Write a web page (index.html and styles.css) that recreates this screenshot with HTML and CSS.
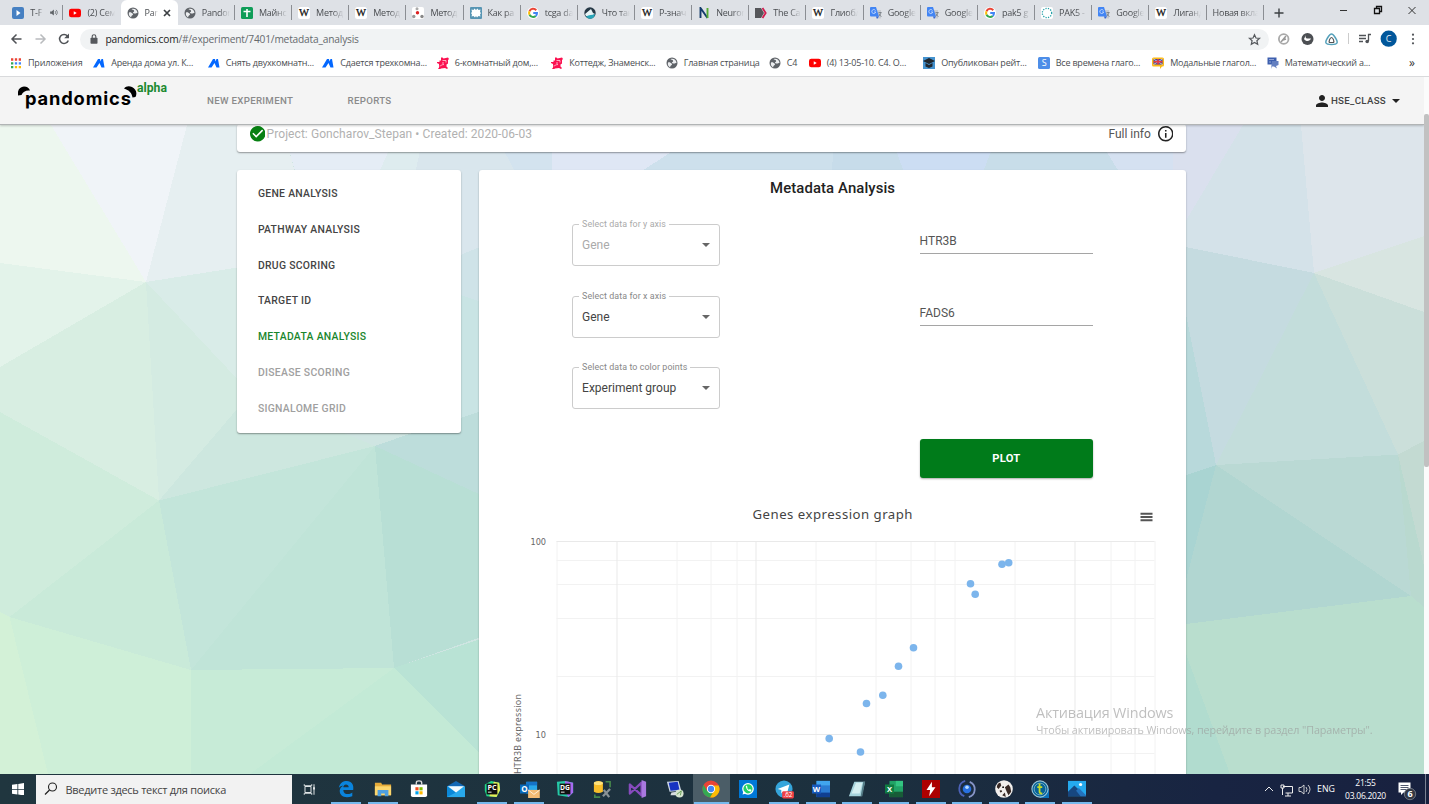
FILE: index.html
```html
<!DOCTYPE html>
<html lang="ru">
<head>
<meta charset="utf-8">
<title>Pandomics</title>
<link rel="stylesheet" href="styles.css">
</head>
<body>
<svg class="defs" aria-hidden="true">
  <symbol id="globe" viewBox="0 0 24 24"><circle cx="12" cy="12" r="11" fill="#5f6368"/><path d="M4 11c4-1 5 1 7 2s1 3-1 4-1 3-2 4C4 18 3 15 4 11zM9 4c1 2 4 1 5 3s-1 3-2 4 2 2 4 2 3-1 5-1c0-5-5-10-12-8z" fill="#eceef0"/></symbol>
  <symbol id="yt" viewBox="0 0 24 24"><rect x="0" y="3.500" width="24" height="17" rx="4.500" fill="#f00"/><path d="M9.500 8.500v7l6-3.500z" fill="#fff"/></symbol>
  <symbol id="wiki" viewBox="0 0 24 24"><rect width="24" height="24" rx="5" fill="#fff"/><text x="12" y="18.500" font-family="Liberation Serif" font-size="19" text-anchor="middle" fill="#111" stroke="#111" stroke-width=".5" textLength="20" lengthAdjust="spacingAndGlyphs">W</text></symbol>
  <symbol id="google" viewBox="0 0 24 24"><circle cx="12" cy="12" r="12" fill="#fff"/><g fill="none" stroke-width="4"><path d="M18.500 6.500A8 8 0 0 0 5 8.500" stroke="#ea4335"/><path d="M5 8.500a8 8 0 0 0 0 7" stroke="#fbbc05"/><path d="M5 15.500a8 8 0 0 0 12.500 2.300" stroke="#34a853"/><path d="M12.500 12H20a8 8 0 0 1-2.500 5.800" stroke="#4285f4"/></g></symbol>
  <symbol id="gtr" viewBox="0 0 24 24"><path d="M10 6h12v17H13z" fill="#c9ccd1"/><path d="M2 0h10l6 19H2a2 2 0 0 1-2-2V2a2 2 0 0 1 2-2z" fill="#4285f4"/><path d="M12 19h6l-4 5z" fill="#3367d6"/><path d="M11 7a4 4 0 1 0 .5 3H8" fill="none" stroke="#dce8fd" stroke-width="1.500"/><path d="M17 11h6m-1 0c-1 4-3 6-4 7m0-5c1 3 3 5 5 6" fill="none" stroke="#6b7178" stroke-width="1.500"/></symbol>
  <symbol id="mount" viewBox="0 0 24 24"><path d="M0 21 10 4h4l1 5 2-5h3l3 17h-6l-4-9-6 9z" fill="#0468ff"/></symbol>
  <symbol id="red" viewBox="0 0 24 24"><path d="M0 10h5V7h3V1h3l2 2 9-2 2 3-2 2v7l-3 2v4l3 3-2 2-4-2-8 1-3 2-3-1 2-3v-7l-4-2z" fill="#fb1150"/><path d="M11 7h7v4M5 18c3 0 4-3 9-3M10 12h4" fill="none" stroke="#fff" stroke-width="1.300"/></symbol>
</svg>

<div class="tabs">
  <div class="tab"><svg class="fav"><rect width="12" height="12" rx="2" fill="#4680c2"/><path d="M4.500 3v6L8.500 6z" fill="#fff"/></svg><span class="short">T-F</span><svg class="speaker" viewBox="0 0 24 24"><path d="M3 9v6h4l6 5V4L7 9z" fill="#5f6368"/><path d="M16 8c2 2 2 6 0 8M19 5c4 4 4 10 0 14" fill="none" stroke="#5f6368" stroke-width="2"/></svg></div>
  <div class="tab"><svg class="fav"><use href="#yt"/></svg><span>(2) Сем</span></div>
  <div class="tab active"><svg class="fav"><use href="#globe"/></svg><span class="short">Pan</span><svg class="close" viewBox="0 0 10 10"><path d="m2 2 6 6m0-6-6 6" stroke="#3c4043" stroke-width="1.700"/></svg></div>
  <div class="tab"><svg class="fav"><use href="#globe"/></svg><span>Pandor</span></div>
  <div class="tab"><svg class="fav"><rect width="12" height="12" rx="1.500" fill="#0f9d58"/><path d="M2.500 4.500h7M6 2v8" stroke="#fff" stroke-width="1.600"/></svg><span>Майнс</span></div>
  <div class="tab"><svg class="fav"><use href="#wiki"/></svg><span>Метод</span></div>
  <div class="tab"><svg class="fav"><use href="#wiki"/></svg><span>Метод</span></div>
  <div class="tab"><svg class="fav"><rect width="12" height="12" rx="2" fill="#fff"/><circle cx="5.500" cy="5.800" r="1.700" fill="#d22"/><circle cx="5" cy="1.800" r="1.500" fill="#aaa"/><circle cx="1.800" cy="9.500" r="1.700" fill="#999"/><circle cx="10" cy="9.500" r="1.700" fill="#888"/></svg><span>Метод</span></div>
  <div class="tab"><svg class="fav"><rect width="12" height="12" rx="1" fill="#5795b3"/><path d="m6 3 1.500-1.500L8.500 3l2-.5L10 5l1 1-1 1.500.5 2-2-.5L7 10.500 6 9l-1 1.500L3.500 9l-2 .5.500-2L1 6l1-1-.500-2.500 2 .5 1-1.500z" fill="#fff"/></svg><span>Как ра</span></div>
  <div class="tab"><svg class="fav"><use href="#google"/></svg><span>tcga da</span></div>
  <div class="tab"><svg class="fav"><circle cx="6" cy="6" r="5.700" fill="#263845"/><path d="M1 7 7 2l2 4 2 1-4 2-5 0z" fill="#e8f3f5"/><path d="M2 9.500c3-2 6-1 9-2.500-1 6-6 6-9 2.500z" fill="#28a5b8"/></svg><span>Что так</span></div>
  <div class="tab"><svg class="fav"><use href="#wiki"/></svg><span>P-знач</span></div>
  <div class="tab"><svg class="fav"><path d="M2.500 11V1l7 10" fill="none" stroke="#143c6b" stroke-width="1.900"/><path d="M9.500 11V1" stroke="#55ad35" stroke-width="1.900"/></svg><span>Neuron</span></div>
  <div class="tab"><svg class="fav"><path d="M0 1h6l3 5-3 5H0z" fill="#55565a"/><path d="m7.500 1 3.200 5-3.200 5" fill="none" stroke="#d21d4f" stroke-width="1.800"/></svg><span>The Ca</span></div>
  <div class="tab"><svg class="fav"><use href="#wiki"/></svg><span>Глиобл</span></div>
  <div class="tab"><svg class="fav"><use href="#gtr"/></svg><span>Google</span></div>
  <div class="tab"><svg class="fav"><use href="#gtr"/></svg><span>Google</span></div>
  <div class="tab"><svg class="fav"><use href="#google"/></svg><span>pak5 g</span></div>
  <div class="tab"><svg class="fav"><rect width="12" height="12" rx="2" fill="#fff"/><circle cx="6" cy="6" r="4.700" fill="none" stroke="#24a0a8" stroke-width="1.300" stroke-dasharray="1.200 1.300"/></svg><span>PAK5 -</span></div>
  <div class="tab"><svg class="fav"><use href="#gtr"/></svg><span>Google</span></div>
  <div class="tab"><svg class="fav"><use href="#wiki"/></svg><span>Лиганд</span></div>
  <div class="tab noicon"><span>Новая вкладка</span></div>
  <svg class="newtab" viewBox="0 0 10 10"><path d="M5 .5v9M.5 5h9" stroke="#3c4043" stroke-width="1.400"/></svg>
  <svg class="winctl" viewBox="1330 0 99 25"><path d="M1340 10.500h7M1408.500 7l7 7m0-7-7 7" stroke="#333" fill="none"/><path d="M1374.500 8.500h5v5h-5zM1376.500 8v-1.500h5v5h-2" stroke="#111" fill="none" stroke-width="1.300"/></svg>
</div>

<div class="toolbar">
  <svg class="nav" viewBox="0 25 80 27"><g fill="none" stroke-width="1.500"><path d="M21.500 39h-9m4-4.500-4.500 4.500 4.500 4.500" stroke="#505357"/><path d="M35.500 39h9m-4-4.500 4.500 4.500-4.500 4.500" stroke="#b9bbbe"/><path d="M67.500 36a4.500 4.500 0 1 0 .8 4.500" stroke="#505357"/></g><path d="M69 33.500v4.800h-4.800z" fill="#505357"/></svg>
  <div class="omnibox">
    <svg class="lock" viewBox="0 0 8 10"><rect x=".5" y="3.700" width="7" height="6" rx=".8" fill="#55585c"/><path d="M2.200 4V2.500a1.800 1.800 0 0 1 3.600 0V4" fill="none" stroke="#55585c" stroke-width="1.100"/></svg>
    <span class="url"><b>pandomics.com</b>/#/experiment/7401/metadata_analysis</span>
    <svg class="star" viewBox="0 0 24 24"><path d="m12 3 2.700 6.200 6.700.6-5 4.500 1.500 6.600L12 17.500l-5.900 3.400 1.500-6.600-5-4.500 6.700-.6z" fill="none" stroke="#55585c" stroke-width="2.200"/></svg>
  </div>
  <svg class="ext" viewBox="1269 25 160 27">
    <circle cx="1283.700" cy="39" r="4.800" fill="none" stroke="#aaa" stroke-width="1.800"/><path d="m1281 42 5-6m-3 4 3-1" stroke="#999" stroke-width="1.500"/>
    <circle cx="1307.500" cy="39" r="6" fill="#4c4f53"/><path d="M1306 35c-1 3 0 4 5 3.500-1 3-5 3.500-7 .5z" fill="#fff"/>
    <path d="M1331.500 34c2 0 6.500 7 5.500 9s-10 2-11 0 3.500-9 5.500-9z" fill="none" stroke="#54a0ba" stroke-width="1.500"/><path d="M1331.500 37.500c1.500 0 3 4 2 5h-4c-1-1 .5-5 2-5z" fill="none" stroke="#555" stroke-width="1.200"/>
    <path d="M1348.500 33v11" stroke="#ccc"/>
    <path d="M1359 35.500h7M1359 38.500h7M1359 41.500h4M1368.500 41v-6.500h2.500" stroke="#505357" stroke-width="1.300" fill="none"/><circle cx="1367.200" cy="41.500" r="1.800" fill="#505357"/>
    <circle cx="1388.700" cy="38.700" r="8.100" fill="#01579b"/><text x="1388.700" y="42" fill="#e6eef5" font-size="9" text-anchor="middle">C</text>
    <g fill="#505357"><circle cx="1413" cy="34.700" r="1.100"/><circle cx="1413" cy="39" r="1.100"/><circle cx="1413" cy="43.300" r="1.100"/></g>
  </svg>
</div>

<div class="bookmarks">
  <div class="bm w1"><svg class="bmi" viewBox="0 0 12 12"><path d="M1 2.500h10" stroke="#ea4335" stroke-width="2.300" stroke-dasharray="2.300 1.550"/><path d="M4.850 6.300h7" stroke="#4285f4" stroke-width="2.300" stroke-dasharray="2.300 1.550"/><path d="M4.850 10.100h7" stroke="#fbbc05" stroke-width="2.300" stroke-dasharray="2.300 1.550"/><path d="M1 5.150h2.300v2.300H1zM1 8.950h2.300v2.300H1z" fill="#34a853"/></svg><span>Приложения</span></div>
  <div class="bm w2"><svg class="bmi"><use href="#mount"/></svg><span>Аренда дома ул. К...</span></div>
  <div class="bm w2"><svg class="bmi"><use href="#mount"/></svg><span>Снять двухкомнатн...</span></div>
  <div class="bm w2"><svg class="bmi"><use href="#mount"/></svg><span>Сдается трехкомна...</span></div>
  <div class="bm w2"><svg class="bmi"><use href="#red"/></svg><span>6-комнатный дом,...</span></div>
  <div class="bm w2"><svg class="bmi"><use href="#red"/></svg><span>Коттедж, Знаменск...</span></div>
  <div class="bm w3"><svg class="bmi"><use href="#globe"/></svg><span>Главная страница</span></div>
  <div class="bm w4"><svg class="bmi"><use href="#globe"/></svg><span>C4</span></div>
  <div class="bm w2"><svg class="bmi"><use href="#yt"/></svg><span>(4) 13-05-10. С4. О...</span></div>
  <div class="bm w2"><svg class="bmi" viewBox="0 0 12 12"><path d="M0 0h12v12H0z" fill="#4593cf"/><path d="m0 4 6-3 6 3-6 3zM2.500 6v3.500L6 11l3.500-1.500V6L6 8z" fill="#20272e"/></svg><span>Опубликован рейт...</span></div>
  <div class="bm w2"><svg class="bmi" viewBox="0 0 12 12"><rect width="12" height="12" rx="1.500" fill="#4d8ee8"/><text x="6" y="9.400" font-size="9" fill="#fff" text-anchor="middle">S</text></svg><span>Все времена глаго...</span></div>
  <div class="bm w2"><svg class="bmi" viewBox="0 0 12 12"><path d="M1.500.5h9q1.500 0 1.500 1.500v6q0 1.500-1.500 1.500H10L8 12V9.500H1.500Q0 9.500 0 8V2Q0 .5 1.500.5z" fill="#fbb917"/><path d="M1.500 2h9v5.500h-9z" fill="#344f9c"/><path d="m1.500 2 9 5.500m0-5.500-9 5.500" stroke="#f5d5d8" stroke-width=".8"/><path d="M6 2v5.500M1.500 4.700h9" stroke="#e83a45" stroke-width="1.500"/></svg><span>Модальные глагол...</span></div>
  <div class="bm w2"><svg class="bmi" viewBox="0 0 12 12"><path d="M.5.500h9v7h-9z" fill="#3d5fae"/><path d="M5 4h6.500v4L9 9l1 2.500-3-2H5L4 12" fill="#637fc0"/><path d="M2 2.500h5M2 5h2" stroke="#a9b8de" stroke-width=".8"/></svg><span>Математический а...</span></div>
  <span class="more">»</span>
</div>

<div class="viewport">
  <div class="page">
    <svg class="backdrop" viewBox="0 125 1424 649" shape-rendering="crispEdges">
      <path d="M0 125h1424v649H0z" fill="#cfe5e2"/>
      <path d="M0 125h51l95 157-146-19z" fill="#edf7ef"/><path d="M51 125h136l-41 157z" fill="#f0f4f8"/>
      <path d="M187 125h95l13 47-35 92-114 18z" fill="#e6eff1"/>
      <path d="M0 263l146 19L0 367z" fill="#e3f3ea"/><path d="M0 367l146-85 13 218.500L0 412z" fill="#d8eee2"/>
      <path d="M146 282l114 121-101 97.500z" fill="#d4ebe2"/><path d="M146 282l114-18v139z" fill="#d9ece8"/>
      <path d="M0 412l159 88.500L9.500 617 0 612z" fill="#cfecdc"/><path d="M9.500 617L159 500.500 191 670z" fill="#c9ead9"/>
      <path d="M159 500.500L250 394l125 52z" fill="#cde7df"/><path d="M159 500.500L375 446 191 670z" fill="#c3e5da"/>
      <path d="M191 670l184-224 19 222z" fill="#c0e4d8"/><path d="M375 446l106 49v142l-87 31z" fill="#b8dfd5"/>
      <path d="M375 446l106-37v86z" fill="#bddddb"/>
      <path d="M191 670l203-2-144 106h-59z" fill="#c7ebd7"/><path d="M394 668L250 774h240V637z" fill="#c3ead6"/><path d="M394 668l92-31v122z" fill="#b9e3d5"/>
      <path d="M9.500 617L191 670v104H48z" fill="#ceefd8"/><path d="M0 612l9.500 5L48 774H0z" fill="#d3f1d7"/>
      <path d="M282 125h120l-11 30-12 30h-80z" fill="#e5edf6"/><path d="M400 125h28l-10 50h-40z" fill="#deecef"/>
      <path d="M426 125h70l21 50v70l-76 17-28-80z" fill="#d9e6ed"/><path d="M458 256l29-12v60l-29-10z" fill="#cfe3e8"/><path d="M458 294l29 10v105l-29 10z" fill="#c9e4e4"/>
      <path d="M490 125h62v50h-35z" fill="#d3e3ef"/><path d="M552 125h160l-72 50h-88z" fill="#dfe7f5"/>
      <path d="M712 125h122v50H636z" fill="#cde0ec"/><path d="M834 125h53l18 50h-73z" fill="#c7dcea"/>
      <path d="M887 125h114l-18 50h-78z" fill="#ccddf3"/><path d="M1001 125h89l32 50H982z" fill="#c8dde9"/>
      <path d="M1090 125h83v50h-52z" fill="#d5e1f1"/><path d="M1173 125h70l-56 97h-14z" fill="#dae0ee"/>
      <path d="M1243 125h58l13 148-130-26v-23z" fill="#d4e2e9"/><path d="M1301 125h123v111l-110 37z" fill="#dde5eb"/>
      <path d="M1314 273l110-37v76z" fill="#d8e5e1"/><path d="M1314 273l110 39v129l-26 13.500z" fill="#cbdfda"/>
      <path d="M1314 273l84 181.500L1216 465z" fill="#c3dddb"/><path d="M1314 273l-98 192-30-149v-69z" fill="#c5dbe0"/>
      <path d="M1186 314l30 151-30 10z" fill="#b8d9db"/><path d="M1186 475l30-10-30 120z" fill="#a9d4d2"/>
      <path d="M1216 465l182-10.500L1411 596z" fill="#bad9d4"/><path d="M1216 465l195 131-225 28v-44z" fill="#b1d6d1"/>
      <path d="M1398 454.500l26-13.500v125z" fill="#c3dad2"/><path d="M1398 454.500L1424 566v41l-13-11z" fill="#b9d9cf"/>
      <path d="M1186 624l225-28 13 11v167h-238z" fill="#b9dece"/><path d="M1186 654l44 120h-44z" fill="#b1dccf"/>
    </svg>
    <header class="appbar">
      <div class="brand">
        <svg class="ears" viewBox="18 85 120 16"><path d="M18 95.500c-1-5 2-9 6-9 3 0 5 1.500 6 4-4-.5-7 1-8.500 4.500zM124 88.500c2-2.500 5-3 8-1.500 4 2 5.500 6 3.500 10l-3 .5c-.5-4.500-3.500-7.500-8.500-9z"/></svg>
        <span class="brandname">pandomics</span><span class="alpha">alpha</span>
      </div>
      <span class="link link-new">NEW EXPERIMENT</span><span class="link link-rep">REPORTS</span>
      <div class="user"><svg class="person" viewBox="4 4 16 16"><path d="M12 12c2.210 0 4-1.790 4-4s-1.790-4-4-4-4 1.790-4 4 1.790 4 4 4zm0 2c-2.670 0-8 1.340-8 4v2h16v-2c0-2.660-5.330-4-8-4z"/></svg><span>HSE_CLASS</span><i class="caret"></i></div>
    </header>
    <main class="content">
      <section class="card info">
        <svg class="round" viewBox="2 2 20 20"><path fill="#078012" d="M12 2C6.480 2 2 6.480 2 12s4.480 10 10 10 10-4.480 10-10S17.520 2 12 2zm-2 15l-5-5 1.410-1.410L10 14.170l7.590-7.590L19 8l-9 9z"/></svg><span class="project">Project: Goncharov_Stepan • Created: 2020-06-03</span><span class="full">Full info</span><svg class="round" viewBox="2 2 20 20"><path fill="#222" d="M11 7h2v2h-2zm0 4h2v6h-2zm1-9C6.480 2 2 6.480 2 12s4.480 10 10 10 10-4.480 10-10S17.520 2 12 2zm0 18c-4.410 0-8-3.590-8-8s3.590-8 8-8 8 3.590 8 8-3.590 8-8 8z"/></svg>
      </section>
      <div class="columns">
        <nav class="card menu">
          <a>GENE ANALYSIS</a><a>PATHWAY ANALYSIS</a><a>DRUG SCORING</a><a>TARGET ID</a><a class="on">METADATA ANALYSIS</a><a class="off">DISEASE SCORING</a><a class="off">SIGNALOME GRID</a>
        </nav>
        <section class="card main">
          <h1>Metadata Analysis</h1>
          <div class="form">
            <div class="select disabled"><label>Select data for y axis</label><span>Gene</span><i class="caret"></i></div>
            <div class="input">HTR3B</div>
            <div class="select"><label>Select data for x axis</label><span>Gene</span><i class="caret"></i></div>
            <div class="input">FADS6</div>
            <div class="select"><label>Select data to color points</label><span>Experiment group</span><i class="caret"></i></div>
            <div></div><div></div>
            <button class="plot">PLOT</button>
          </div>
          <svg class="chart" viewBox="479.500 500 707 274">
            <text x="753" y="518.500" textLength="160" class="ctitle">Genes expression graph</text>
            <path d="M1141 513.700h12M1141 517h12M1141 520.300h12" stroke="#555" stroke-width="2"/>
            <path class="minor" d="M557.500 541v240M677.500 541v240M711.500 541v240M737.500 541v240M816.500 541v240M876.500 541v240M911.500 541v240M935.500 541v240M955.500 541v240M1015.500 541v240M1111.500 541v240M1135.500 541v240M1155.500 541v240M557 560.500h598M557 584.500h598M557 618.500h598M557 676.500h598M557 753.500h598"/>
            <path class="major" d="M617.500 541v240M756.500 541v240M1075.500 541v240M557 541.500h598M557 734.500h598"/>
            <g class="axis"><text x="531" y="544.500" textLength="15.500">100</text><text x="536" y="737.500" textLength="10.500">10</text><text transform="translate(521.500 774) rotate(-90)" textLength="80" class="ytitle">HTR3B expression</text></g>
            <g fill="#7cb5ec"><circle cx="914" cy="647.700" r="3.800"/><circle cx="899" cy="666.300" r="3.800"/><circle cx="883.300" cy="695.300" r="3.800"/><circle cx="867" cy="703.500" r="3.800"/><circle cx="829.700" cy="738.600" r="3.800"/><circle cx="861" cy="752" r="3.800"/><circle cx="1002.500" cy="564.200" r="3.800"/><circle cx="1009.200" cy="562.700" r="3.800"/><circle cx="971" cy="583.700" r="3.800"/><circle cx="975.700" cy="594.200" r="3.800"/></g>
          </svg>
        </section>
      </div>
    </main>
  </div>
  <div class="scrollbar"><div class="thumb"></div></div>
  <div class="watermark"><div class="wm1">Активация Windows</div><div class="wm2">Чтобы активировать Windows, перейдите в раздел "Параметры".</div></div>
</div>

<footer class="taskbar">
  <div class="start"><svg viewBox="0 0 12 12" class="win"><path d="M0 1.700 5.200 1v4.700H0zM6 .9 12 0v5.700H6zM0 6.400h5.200v4.700L0 10.400zM6 6.400h6V12l-6-.9z" fill="#fff"/></svg></div>
  <div class="search"><svg class="mag" viewBox="0 0 14 14"><circle cx="8.500" cy="5" r="4" fill="none" stroke="#222" stroke-width="1.100"/><path d="M5.500 8 1 12.500" stroke="#222" stroke-width="1.200"/></svg><span>Введите здесь текст для поиска</span></div>
  <div class="apps">
    <div class="app"><svg viewBox="0 0 20 20"><path d="M4 6h8v8H4zM3 3v2h10V3M3 17v-2h10v2M16 3v14" fill="none" stroke="#e4e8ea" stroke-width="1.300"/><path d="M15 7h2v3h-2z" fill="#fff"/></svg></div>
    <div class="app open"><svg viewBox="0 0 20 20"><path d="M2 9C3 3 7 1 11 1c5 0 8 4 7 10H7c0 5 6 6 10 3v4C9 21 3 18 3 12c0-3 2-5 5-6-3 0-5 1-6 3zm5-1h6c0-4-6-4-6 0z" fill="#0a84dd"/></svg></div>
    <div class="app open"><svg viewBox="0 0 20 20"><path d="M1 3h7l1 2h10v12H1z" fill="#e5ab3a"/><path d="M1 7h18v10H1z" fill="#fbd66d"/><path d="M4 11h12v7h-4v-3H8v3H4z" fill="#4d9fe0"/></svg></div>
    <div class="app"><svg viewBox="0 0 20 20"><path d="M7 5V3q0-2 3-2t3 2v2" fill="none" stroke="#ddd" stroke-width="1.500"/><path d="M1 5h18v12q0 2-2 2H3q-2 0-2-2z" fill="#fff"/><path d="M6 8h3.500v3.500H6z" fill="#f25022"/><path d="M10.500 8H14v3.500h-3.500z" fill="#7fba00"/><path d="M6 12.500h3.500V16H6z" fill="#00a4ef"/><path d="M10.500 12.500H14V16h-3.500z" fill="#ffb900"/></svg></div>
    <div class="app"><svg viewBox="0 0 20 20"><path d="m0 7 10-6 10 6-10 5z" fill="#1368b4"/><path d="M0 7h20v12H0z" fill="#28a8ea"/><path d="m0 7 10 7L0 19z" fill="#0b88d8"/><path d="M1 7h18l-9 7z" fill="#f3f9fc"/></svg></div>
    <div class="app open"><svg viewBox="0 0 20 20"><path d="m2 5 7-4 9 2 1 8-4 8-11-1-2-6z" fill="#21d789"/><path d="m12 2 6 1 1 8-4 8-8-1z" fill="#e7ef57"/><path d="M4 4h12v12H4z" fill="#111"/><text x="10" y="11" font-size="8" font-weight="700" fill="#fff" text-anchor="middle">PC</text><path d="M5.500 13.500h4" stroke="#fff"/></svg></div>
    <div class="app open"><svg viewBox="0 0 20 20"><path d="M7 2h12v13H7z" fill="#28a8ea"/><path d="M7 2h12v4H7z" fill="#1573c8"/><path d="M0 5h10v10H0z" fill="#0869ba"/><text x="5" y="13" font-size="9" font-weight="700" fill="#fff" text-anchor="middle">O</text><path d="M9 11h13v9H9z" fill="#f2bb75"/><path d="m9 11 6.500 5 6.500-5" fill="none" stroke="#fff3df"/></svg></div>
    <div class="app"><svg viewBox="0 0 20 20"><path d="m1 2 9-1 9 2v11l-5 5L2 17z" fill="#25c9a8"/><path d="m10 1 9 2v11l-5 5-4-5z" fill="#a66af2"/><path d="M4 4h12v12H4z" fill="#111"/><text x="10" y="11" font-size="7.500" font-weight="700" fill="#fff" text-anchor="middle">DG</text><path d="M5.500 13.500h4" stroke="#fff"/></svg></div>
    <div class="app"><svg viewBox="0 0 20 20"><path d="M1 3q5-4 10 0v10q-5 3-10 0z" fill="#f8bd29"/><ellipse cx="6" cy="3.500" rx="5" ry="2" fill="#ffe17b"/><path d="M14 2h5v6M2 16v3h6" fill="none" stroke="#47884b" stroke-width="1.800"/><path d="m11 18 8-8m-7 1 6 8" stroke="#8a9296" stroke-width="2.500"/></svg></div>
    <div class="app"><svg viewBox="0 0 20 20"><path d="M1 5v10l13-12v14z" fill="none" stroke="#864bbd" stroke-width="2.600" stroke-linejoin="round"/><path d="m14 0 5 2v16l-5 2z" fill="#a879df"/></svg></div>
    <div class="app"><svg viewBox="0 0 20 20"><path d="m1 2 13-1 3 11-13 1z" fill="#cdd8e8"/><path d="m3 3 10-1 2 9-10 1z" fill="#1733c1"/><path d="m6 14 6-1 3 4H5z" fill="#d8dce2"/><circle cx="15" cy="15" r="4.500" fill="#d7e4d1"/><path d="m12 16 5-4-1 5" stroke="#5f9a4c" fill="none"/></svg></div>
    <div class="app current"><svg viewBox="0 0 20 20"><circle cx="10" cy="10" r="9.500" fill="#ea4335"/><path d="M1.800 5.200A9.500 9.500 0 0 0 9 19.500l4-7H6z" fill="#34a853"/><path d="M18.500 6A9.500 9.500 0 0 1 9 19.500L14 11l-1-5z" fill="#fbbc05"/><circle cx="10" cy="10" r="4.600" fill="#fff"/><circle cx="10" cy="10" r="3.500" fill="#4285f4"/></svg></div>
    <div class="app"><svg viewBox="0 0 20 20"><path d="M0 0h20v20H0z" fill="#0078d7"/><circle cx="10" cy="9.800" r="5.800" fill="#25d366" stroke="#fff" stroke-width="1.400"/><path d="m4 16 1-4 3 3z" fill="#fff"/><path d="M7.500 7c1 4 2 5 5.500 6l1-2-2-1-1 1-2-2 .5-1-1-2z" fill="#fff"/></svg></div>
    <div class="app open"><svg viewBox="0 0 20 20"><circle cx="10" cy="10" r="9.500" fill="#35a5db"/><path d="m3 10 13-5-3 11-4-3-2 2v-4z" fill="#fff"/><rect x="8" y="12.500" width="13" height="8" rx="1.500" fill="#f23f44"/><text x="14.500" y="19" font-size="7" fill="#fff" text-anchor="middle">.62</text></svg></div>
    <div class="app open"><svg viewBox="0 0 20 20"><path d="M5 1h15v18H5z" fill="#2b7cd3"/><path d="M5 1h15v5H5z" fill="#41a5ee"/><path d="M5 14h15v5H5z" fill="#103f91"/><path d="M0 5h10v10H0z" fill="#185abd"/><text x="5" y="13" font-size="8.500" font-weight="700" fill="#fff" text-anchor="middle">W</text></svg></div>
    <div class="app open"><svg viewBox="0 0 20 20"><path d="M7 2h12l-4 16H1z" fill="#a6d3dc"/><path d="M9 3h7l-3 12H4z" fill="#d5eff1"/><path d="m19 2-3 16-2 0 3-16z" fill="#547b85"/></svg></div>
    <div class="app open"><svg viewBox="0 0 20 20"><path d="M5 1h15v18H5z" fill="#21a366"/><path d="M12 1h8v6h-8z" fill="#33c481"/><path d="M5 13h15v6H5z" fill="#185c37"/><path d="M0 5h10v10H0z" fill="#107c41"/><text x="5" y="13" font-size="8.500" font-weight="700" fill="#fff" text-anchor="middle">X</text></svg></div>
    <div class="app open"><svg viewBox="0 0 20 20"><path d="M0 0h20v20H0z" fill="#ac0000"/><path d="m11 2-6 9h4l-1 7 7-10h-4z" fill="#fff"/></svg></div>
    <div class="app open"><svg viewBox="0 0 20 20"><path d="M8 1A9 9 0 0 0 7 18" fill="none" stroke="#4c62b8" stroke-width="2"/><path d="M13 2a9 9 0 0 1-1 17" fill="none" stroke="#8694c7" stroke-width="2"/><circle cx="10" cy="10" r="4.800" fill="#2870e0"/><circle cx="10" cy="8" r="2" fill="#b9dcff"/></svg></div>
    <div class="app open"><svg viewBox="0 0 20 20"><circle cx="10" cy="10" r="9.800" fill="#f2efed"/><path d="M2 8c0-3 2-5 4-5l1 3-3 4zM11 8l4-3 2 3 1 5-3 4-2-4zM5 12l2-1 1 2-2 1zM8 17l3-3 1 5z" fill="#382925"/><circle cx="9" cy="8" r="1"/></svg></div>
    <div class="app open"><svg viewBox="0 0 20 20"><path d="M10 10h10v10H10z" fill="#0870b8"/><circle cx="10" cy="10" r="9" fill="#056196" stroke="#9cc6d8" stroke-width="1.200"/><circle cx="10" cy="10" r="6.500" fill="none" stroke="#7bafc5"/><path d="M9.500 4v9q0 2 3 2M7 8h5.500" fill="none" stroke="#c6db27" stroke-width="2"/></svg></div>
    <div class="app open"><svg viewBox="0 0 20 20"><path d="M0 1h20v17H0z" fill="#25a9ee"/><path d="m0 13 7-7 13 12H0z" fill="#174780"/><path d="m9 12 3-3 8 8v1h-6z" fill="#2472bc"/><circle cx="14" cy="5" r="1.800" fill="#fff"/></svg></div>
  </div>
  <svg class="tray" viewBox="1260 774 70 30"><path d="m1265 791 4-4 4 4M1283 786.500h9.500v6.500h-7M1288 793v3m-3 0h6M1281 785h3v3h-3zM1282.500 788v7" fill="none" stroke="#eee"/><path d="M1299 787.500h2l3-2.500v9l-3-2.500h-2zM1306 787q2 2.500 0 5M1308 785q4 4 0 9" fill="none" stroke="#ddd" stroke-width=".9"/></svg>
  <span class="lang">ENG</span>
  <div class="clock"><span>21:55</span><span>03.06.2020</span></div>
  <svg class="note" viewBox="1394 774 35 30"><path d="M1398.500 782.500h12v10h-7l-2.500 2.500v-2.500h-2.500z" fill="#fff"/><path d="M1400.500 785.500h8m-8 2h8m-8 2h6" stroke="#26304a" stroke-width=".8"/><circle cx="1410" cy="794" r="5.700" fill="#333844" stroke="#8b909b" stroke-width=".7"/><text x="1410" y="797.300" font-size="9" font-weight="700" fill="#fff" text-anchor="middle">6</text><path d="M1425.500 774v30" stroke="#7b8292"/></svg>
</footer>
</body>
</html>
```

FILE: styles.css
```css
* { box-sizing: border-box; }
body { margin: 0; width: 1429px; height: 804px; overflow: hidden; display: flex; flex-direction: column; font-family: "Open Sans", "Noto Sans", sans-serif; font-size: 9px; color: #4a4d51; background: #fff; }
svg { display: block; flex: none; }
.defs { position: absolute; width: 0; height: 0; }

.tabs { height: 25px; flex: none; background: #dee1e6; display: flex; padding-left: 6.3px; }
.tab { width: 57.17px; flex: none; display: flex; align-items: center; padding-left: 6px; gap: 6px; background: linear-gradient(#8b8e93, #8b8e93) right 5px / 1px 15px no-repeat; }
.tab span { width: 28px; overflow: hidden; white-space: nowrap; line-height: 16px; letter-spacing: -.25px; -webkit-mask-image: linear-gradient(90deg, #000 60%, transparent); mask-image: linear-gradient(90deg, #000 60%, transparent); }
.tab .short { width: 13px; }
.tab.noicon span { width: 45px; }
.tab.active { background: #fff; border-radius: 6px 6px 0 0; }
.tab:nth-child(2) { background: none; }
.fav { width: 12px; height: 12px; }
.speaker { width: 9px; height: 9px; }
.close { width: 10px; height: 10px; margin-left: -2px; }
.newtab { width: 10px; height: 10px; margin: 8px 0 0 10px; }
.winctl { width: 99px; height: 25px; margin-left: auto; }

.toolbar { height: 27px; flex: none; display: flex; align-items: center; }
.nav { width: 80px; height: 27px; }
.omnibox { width: 1189px; height: 21px; margin-top: 1px; border-radius: 11px; background: #f1f3f4; display: flex; align-items: center; padding: 0 8px 0 10px; }
.lock { width: 8px; height: 10px; }
.url { margin-left: 7.5px; font-size: 10.2px; letter-spacing: -.19px; line-height: 20px; color: #666a6e; white-space: nowrap; }
.url b { font-weight: 400; color: #222; }
.star { width: 13px; height: 13px; margin-left: auto; }
.ext { width: 160px; height: 27px; font-family: "Open Sans", sans-serif; }

.bookmarks { height: 25px; flex: none; border-bottom: 1px solid #d9dadc; display: flex; padding-left: 10px; align-items: center; }
.bm { display: flex; align-items: center; gap: 6px; white-space: nowrap; flex: none; margin-top: -3px; letter-spacing: -.2px; }
.bmi { width: 12px; height: 12px; }
.w1 { width: 83.2px; }
.w2 { width: 114.5px; }
.w3 { width: 103px; }
.w4 { width: 40px; }
.more { margin: -4px 14px 0 auto; font-size: 12px; color: #333; }

.viewport { flex: 1; min-height: 0; display: flex; position: relative; overflow: hidden; }
.page { width: 1424px; flex: none; position: relative; overflow: hidden; font-family: Roboto, sans-serif; }
.backdrop { position: absolute; left: 0; top: 48px; width: 1424px; height: 649px; }
.scrollbar { width: 5px; background: #fbfbfb; padding-top: 37px; }
.thumb { height: 353px; background: #c1c1c1; border-radius: 2px; }

.appbar { position: relative; z-index: 1; height: 48px; background: #f4f4f4; border-bottom: 1px solid #b1b4b5; box-shadow: 0 1px 2px #0003; display: flex; align-items: center; font-size: 9.7px; font-weight: 500; }
.brand { width: 207px; height: 47px; position: relative; padding: 10px 0 0 25px; display: flex; align-items: flex-start; color: #000; }
.ears { position: absolute; left: 18px; top: 8px; width: 120px; height: 16px; }
.brandname { width: 112px; font: 700 18.3px/22px Inter, sans-serif; letter-spacing: .85px; }
.alpha { font: 700 12.2px/14px Roboto, sans-serif; margin-top: -6px; color: #1c8a30; }
.link { color: #8b8b8b; letter-spacing: .3px; }
.link-new { width: 140.5px; }
.user { margin-left: auto; padding-right: 24px; display: flex; align-items: center; gap: 3px; color: #444; letter-spacing: .3px; }
.person { width: 12px; height: 12px; fill: #222; }
.caret { width: 0; height: 0; border: 4px solid transparent; border-top-color: #222; border-bottom: 0; margin-left: 3px; }

.content { position: relative; width: 949.5px; margin-left: 236.9px; }
.card { background: #fff; border-radius: 3px; box-shadow: 0 1px 2px #0004, 0 1px 1px #0002; }
.info { height: 28px; margin-top: -1px; display: flex; align-items: center; padding: 0 13px 9px 13px; font-size: 12px; color: #b1b1b1; }
.round { width: 15.5px; height: 15.5px; margin-top: 1px; }
.project { letter-spacing: .07px; margin-left: 1.2px; }
.full { margin-left: auto; margin-right: 7px; color: #555; }
.columns { display: flex; align-items: flex-start; gap: 17.7px; padding-top: 18px; }
.menu { width: 224.5px; height: 262.5px; padding: 6px 0 0 21px; font-size: 10.4px; font-weight: 500; letter-spacing: .3px; color: #444; display: flex; flex-direction: column; }
.menu a { height: 35.75px; line-height: 36.5px; }
.menu .on { color: #1a862d; }
.menu .off { color: #a0a0a0; }
.main { width: 707px; height: 620px; }
h1 { margin: 0; height: 54px; line-height: 37px; text-align: center; font-size: 14.9px; font-weight: 500; color: #222; letter-spacing: .1px; }
.form { display: grid; grid-template: repeat(4, 71.5px) / 148.5px 173.5px; column-gap: 199.5px; margin-left: 92.5px; height: 276px; }
.select { height: 42px; position: relative; border: 1px solid #ccc; border-radius: 3px; display: flex; align-items: center; justify-content: space-between; padding: 0 9.500px; font-size: 12px; color: #444; }
.select label { position: absolute; left: 6.5px; top: -7px; padding: 0 3px; background: #fff; font-size: 8.9px; line-height: 12px; color: #888; white-space: nowrap; letter-spacing: .08px; }
.disabled { color: #aaa; }
.disabled label { color: #aaa; }
.select .caret { border-top-color: #666; }
.input { height: 30px; padding-top: 7px; border-bottom: 1px solid #a5a5a5; font-size: 12px; line-height: 21px; color: #555; }
.plot { width: 173.5px; height: 39px; padding: 0; border: 0; border-radius: 3px; background: #007b1a; color: #fff; font: 700 11.2px Roboto, sans-serif; letter-spacing: .3px; box-shadow: 0 1px 2px #0005; }
.chart { width: 707px; height: 274px; }
.ctitle { font: 13.2px "Noto Sans", sans-serif; fill: #444; }
.axis { font: 8.2px "DejaVu Sans", sans-serif; fill: #666; }
.ytitle { font: 8.9px "Noto Sans", sans-serif; }
.minor { stroke: #f2f2f2; fill: none; }
.major { stroke: #e9e9e9; fill: none; }

.watermark { position: absolute; z-index: 2; left: 1036px; top: 625px; color: #999; opacity: .62; white-space: nowrap; }
.wm1 { font-size: 14.4px; line-height: 21px; letter-spacing: -.15px; }
.wm2 { font-size: 10.8px; line-height: 13px; letter-spacing: -.12px; }

.taskbar { height: 30px; flex: none; background: linear-gradient(90deg, #20363f, #1c303e 60%, #182442 85%, #18213f); color: #fff; display: flex; align-items: center; }
.start { width: 36px; display: flex; justify-content: center; }
.win { width: 12.5px; height: 12.5px; }
.search { width: 255.5px; height: 29px; background: #f2f2f2; color: #444; display: flex; align-items: center; font-size: 11px; letter-spacing: -.28px; gap: 7.5px; padding-left: 8px; white-space: nowrap; }
.mag { width: 14px; height: 14px; }
.apps { display: flex; height: 30px; flex: none; width: 803px; }
.app { width: 36.53px; height: 30px; flex: none; display: flex; justify-content: center; align-items: center; }
.app svg { width: 18px; height: 18px; overflow: visible; }
.app:first-child svg { width: 15px; height: 15px; }
.open { background: linear-gradient(#76b9ed, #76b9ed) center bottom / 30px 2px no-repeat; }
.current { background: linear-gradient(#76b9ed, #76b9ed) center bottom / 35px 2px no-repeat, #4b5d67; }
.tray { width: 70px; height: 30px; margin-left: auto; }
.lang { width: 14px; flex: none; margin-left: -12.5px; font-size: 8.8px; }
.clock { width: 63px; padding-left: 6px; flex: none; display: flex; flex-direction: column; align-items: center; font-size: 8.5px; line-height: 13.5px; letter-spacing: -.25px; }
.note { width: 35px; height: 30px; }
```
